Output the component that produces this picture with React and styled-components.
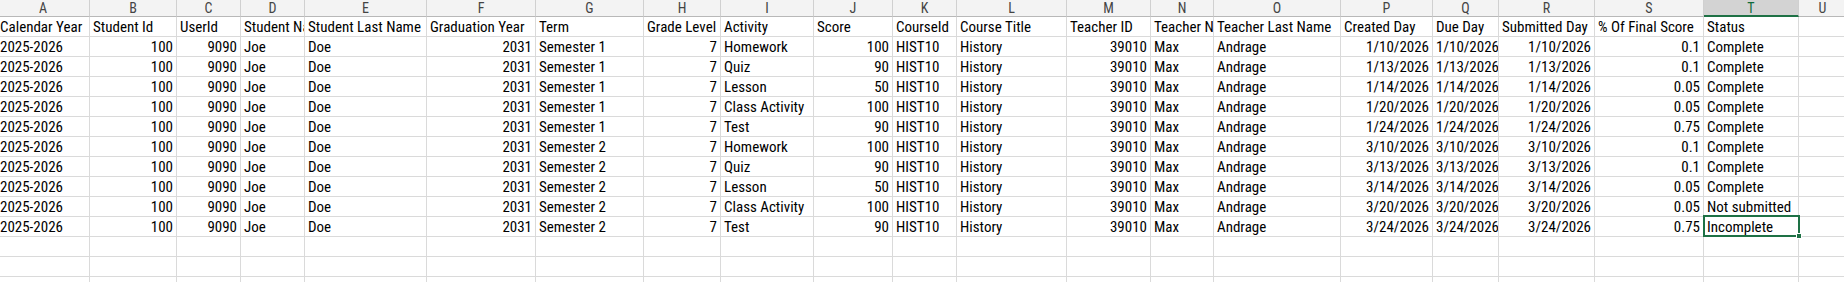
import React from "react"
import styled, { createGlobalStyle, css } from "styled-components"

const GlobalStyle = createGlobalStyle`
  html, body {
    margin: 0;
    padding: 0;
    background: #ffffff;
    overflow: hidden;
  }
`

// column widths measured off the sheet, A..U (A is scrolled a few px out of view)
const COLUMNS = [
  { key: "A", width: 93 },
  { key: "B", width: 87 },
  { key: "C", width: 64 },
  { key: "D", width: 64 },
  { key: "E", width: 122 },
  { key: "F", width: 109 },
  { key: "G", width: 108 },
  { key: "H", width: 77 },
  { key: "I", width: 93 },
  { key: "J", width: 79 },
  { key: "K", width: 64 },
  { key: "L", width: 110 },
  { key: "M", width: 84 },
  { key: "N", width: 63 },
  { key: "O", width: 127 },
  { key: "P", width: 92 },
  { key: "Q", width: 66 },
  { key: "R", width: 96 },
  { key: "S", width: 109 },
  { key: "T", width: 95 },
  { key: "U", width: 48 },
]

const HEADERS = [
  "Calendar Year",
  "Student Id",
  "UserId",
  "Student Name",
  "Student Last Name",
  "Graduation Year",
  "Term",
  "Grade Level",
  "Activity",
  "Score",
  "CourseId",
  "Course Title",
  "Teacher ID",
  "Teacher Name",
  "Teacher Last Name",
  "Created Day",
  "Due Day",
  "Submitted Day",
  "% Of Final Score",
  "Status",
  "",
]

// which columns hold numbers (right aligned)
const NUMERIC = [false, true, true, false, false, true, false, true, false, true, false, false, true, false, false, true, true, true, true, false, false]

const activities = [
  ["Homework", 100, "1/10/2026", 0.1, "Complete"],
  ["Quiz", 90, "1/13/2026", 0.1, "Complete"],
  ["Lesson", 50, "1/14/2026", 0.05, "Complete"],
  ["Class Activity", 100, "1/20/2026", 0.05, "Complete"],
  ["Test", 90, "1/24/2026", 0.75, "Complete"],
  ["Homework", 100, "3/10/2026", 0.1, "Complete"],
  ["Quiz", 90, "3/13/2026", 0.1, "Complete"],
  ["Lesson", 50, "3/14/2026", 0.05, "Complete"],
  ["Class Activity", 100, "3/20/2026", 0.05, "Not submitted"],
  ["Test", 90, "3/24/2026", 0.75, "Incomplete"],
]

const ROWS = activities.map(([activity, score, day, pct, status], i) => [
  "2025-2026",
  "100",
  "9090",
  "Joe",
  "Doe",
  "2031",
  i < 5 ? "Semester 1" : "Semester 2",
  "7",
  activity,
  String(score),
  "HIST10",
  "History",
  "39010",
  "Max",
  "Andrage",
  day,
  day,
  day,
  String(pct),
  status,
  "",
])

const EMPTY_ROWS = 3
const ACTIVE_COL = 19
const ACTIVE_ROW = ROWS.length

const FONT = `Roboto, "Liberation Sans", Arial, sans-serif`

const Viewport = styled.div`
  width: 1844px;
  height: 282px;
  overflow: hidden;
`

const Sheet = styled.div`
  display: grid;
  grid-template-columns: ${COLUMNS.map((c) => `${c.width}px`).join(" ")};
  grid-template-rows: 17px;
  grid-auto-rows: 20px;
  margin-left: -3px;
  font-family: ${FONT};
  font-stretch: 75%;
  font-size: 15px;
  color: #000000;
`

const ColHead = styled.div`
  box-sizing: border-box;
  height: 17px;
  background: ${(p) => (p.$active ? "#d3d3d3" : "#f3f3f3")};
  color: ${(p) => (p.$active ? "#0f6b3a" : "#444444")};
  border-right: 1px solid #d0d0d0;
  border-bottom: ${(p) => (p.$active ? "2px solid #1e7145" : "1px solid #b8b8b8")};
  font-size: 14px;
  line-height: 16px;
  text-align: center;
  overflow: hidden;
`

const Cell = styled.div`
  box-sizing: border-box;
  height: 20px;
  padding: 2px 3px 0 3px;
  line-height: 17px;
  border-right: 1px solid #dadada;
  border-bottom: 1px solid #dadada;
  text-align: ${(p) => (p.$numeric ? "right" : "left")};
  white-space: nowrap;
  overflow: hidden;
  position: relative;

  ${(p) =>
    p.$selected &&
    css`
      overflow: visible;
      z-index: 2;

      &::after {
        content: "";
        position: absolute;
        top: -2px;
        left: -1px;
        right: -2px;
        bottom: -1px;
        border: 2px solid #1e7145;
        pointer-events: none;
      }

      &::before {
        content: "";
        position: absolute;
        right: -4px;
        bottom: -3px;
        width: 6px;
        height: 6px;
        background: #1e7145;
        border: 1px solid #ffffff;
        box-sizing: border-box;
        z-index: 3;
      }
    `}
`

const App = () => {
  const allRows = [HEADERS, ...ROWS, ...Array.from({ length: EMPTY_ROWS }, () => HEADERS.map(() => ""))]

  return (
    <>
      <GlobalStyle />
      <Viewport>
        <Sheet>
          {COLUMNS.map((col, i) => (
            <ColHead key={col.key} $active={i === ACTIVE_COL}>
              {col.key}
            </ColHead>
          ))}
          {allRows.map((row, r) =>
            row.map((value, c) => (
              <Cell
                key={`${r}-${c}`}
                $numeric={r > 0 && NUMERIC[c]}
                $selected={r === ACTIVE_ROW && c === ACTIVE_COL}
              >
                {value}
              </Cell>
            ))
          )}
        </Sheet>
      </Viewport>
    </>
  )
}

export default App
